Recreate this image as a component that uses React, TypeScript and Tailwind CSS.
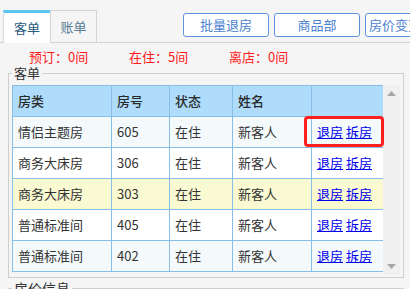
import React from "react";

const rows = [
  { type: "情侣主题房", no: "605", status: "在住", name: "新客人", bg: "bg-[#f4fafc]" },
  { type: "商务大床房", no: "306", status: "在住", name: "新客人", bg: "bg-white" },
  { type: "商务大床房", no: "303", status: "在住", name: "新客人", bg: "bg-[#fafad2]" },
  { type: "普通标准间", no: "405", status: "在住", name: "新客人", bg: "bg-white" },
  { type: "普通标准间", no: "402", status: "在住", name: "新客人", bg: "bg-[#f4fafc]" },
];

export default function App() {
  return (
    <div
      className="w-[410px] h-[289px] overflow-hidden bg-[#f5f5f5] relative text-[13px] text-[#333]"
      style={{ fontFamily: '"Noto Sans CJK SC", "Microsoft YaHei", sans-serif' }}
    >
      {/* header */}
      <div className="flex h-[43px] pt-[10px] pl-[3px] border-b border-[#d4d4d4]">
        <div className="w-[47px] h-[33px] -mb-px bg-white border-t-[3px] border-t-[#5cc5f4] border-l border-[#d8d8d8] flex items-center justify-center text-[#285a7c] relative z-10 shrink-0">
          客单
        </div>
        <div className="w-[47px] h-[32px] bg-[#f5f5f5] border border-b-0 border-[#d4d4d4] flex items-center justify-center text-[#587c96] shrink-0">
          账单
        </div>
        <div className="flex gap-[5px] ml-[86px] mt-[3px] shrink-0">
          <div className="w-[86px] h-[24px] rounded-[3px] border border-[#5f92dc] bg-white text-[#4b7fd0] flex items-center justify-center shrink-0">
            批量退房
          </div>
          <div className="w-[86px] h-[24px] rounded-[3px] border border-[#5f92dc] bg-white text-[#4b7fd0] flex items-center justify-center shrink-0">
            商品部
          </div>
          <div className="w-[100px] h-[24px] rounded-[3px] border border-[#5f92dc] bg-white text-[#4b7fd0] flex items-center pl-[3px] shrink-0 whitespace-nowrap">
            房价变更
          </div>
        </div>
      </div>

      {/* stats */}
      <div className="flex pl-[29px] mt-[6px] h-[16px] items-center text-[#ff1a1a] leading-[16px]">
        <div className="w-[100px]">预订：0间</div>
        <div className="w-[100px]">在住：5间</div>
        <div className="w-[100px]">离店：0间</div>
      </div>

      {/* fieldset 客单 */}
      <fieldset className="ml-[8px] w-[396px] border border-[#cfcfcf] pl-[3px] pr-[2px] pb-[2px]">
        <legend className="px-[2px] leading-[16px] text-[#333]">客单</legend>
        <div className="flex h-[190px] mt-[4px]">
          <div className="w-[371px] h-full overflow-hidden">
            <table className="border-collapse table-fixed w-[371px]">
              <colgroup>
                <col className="w-[99px]" />
                <col className="w-[58px]" />
                <col className="w-[63px]" />
                <col className="w-[79px]" />
                <col className="w-[72px]" />
              </colgroup>
              <thead>
                <tr className="bg-[#afdcfb] h-[31px]">
                  {["房类", "房号", "状态", "姓名", ""].map((h, i) => (
                    <th
                      key={i}
                      className="border border-[#88bde6] px-[5px] text-left font-medium text-[#2a2a2a]"
                    >
                      {h}
                    </th>
                  ))}
                </tr>
              </thead>
              <tbody>
                {rows.map((r, i) => (
                  <tr key={i} className={`${r.bg} h-[31px]`}>
                    <td className="border border-[#88bde6] px-[5px]">{r.type}</td>
                    <td className="border border-[#88bde6] px-[5px]">{r.no}</td>
                    <td className="border border-[#88bde6] px-[5px]">{r.status}</td>
                    <td className="border border-[#88bde6] px-[5px]">{r.name}</td>
                    <td className="border border-[#88bde6] px-[5px] whitespace-nowrap">
                      <a className="text-[#0000ee] underline">退房</a>{" "}
                      <a className="text-[#0000ee] underline">拆房</a>
                    </td>
                  </tr>
                ))}
              </tbody>
            </table>
          </div>
          <div className="w-[17px] h-full bg-[#f0f0f0] flex flex-col items-center justify-between py-[6px]">
            <svg width="9" height="5" viewBox="0 0 9 5">
              <path d="M0 5 L4.5 0 L9 5 Z" fill="#a8a8a8" />
            </svg>
            <svg width="9" height="5" viewBox="0 0 9 5">
              <path d="M0 0 L4.5 5 L9 0 Z" fill="#a8a8a8" />
            </svg>
          </div>
        </div>
      </fieldset>

      {/* fieldset 房价信息 */}
      <fieldset className="ml-[8px] w-[396px] border border-[#cfcfcf] pl-[3px] mt-[2px] h-[40px]">
        <legend className="px-[2px] leading-[16px] text-[14px] text-[#333]">房价信息</legend>
      </fieldset>

      {/* red highlight */}
      <div className="absolute left-[304px] top-[116px] w-[80px] h-[31px] border-[3px] border-[#ff1f1f] rounded-[4px] pointer-events-none" />
    </div>
  );
}
